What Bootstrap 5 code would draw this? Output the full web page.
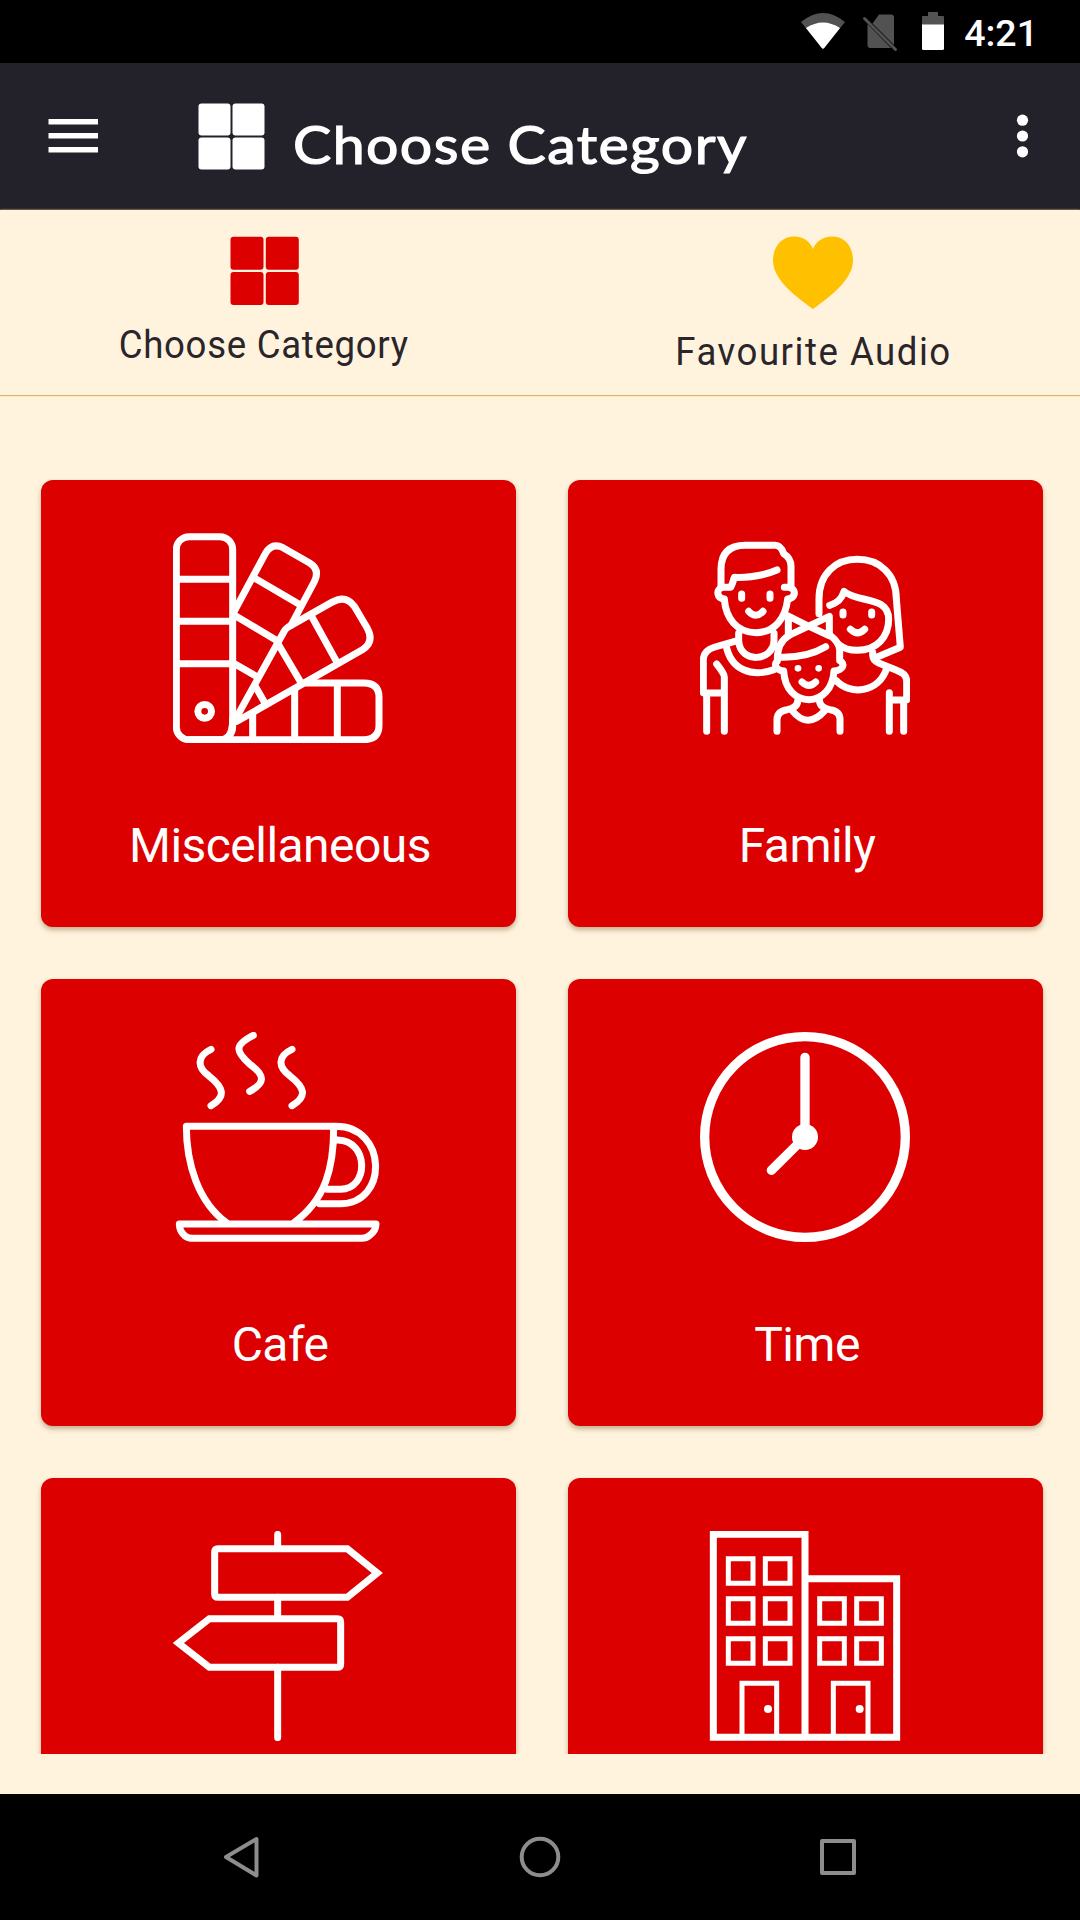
<!DOCTYPE html>
<html lang="en">
<head>
<meta charset="utf-8">
<meta name="viewport" content="width=device-width, initial-scale=1">
<title>Choose Category</title>
<link rel="stylesheet" href="https://cdn.jsdelivr.net/npm/bootstrap@5.3.0/dist/css/bootstrap.min.css">
<style>
  body { font-family: Roboto, "Liberation Sans", sans-serif; background: #fff3dd; width: 1080px; height: 1920px; overflow: hidden; }
  svg { display: block; flex: none; }
  .status-bar { height: 63px; padding-right: 42px; background: #000; }
  .clock { font-size: 37.5px; font-weight: 500; line-height: 44px; margin: 10.5px 0 0 19px; }
  .app-bar { height: 147px; background: #23212a; padding: 0 50px 1px 48px; }
  .app-title { font-family: Lato, sans-serif; font-weight: 400; font-size: 53px; line-height: 66px; letter-spacing: 1.3px; margin: 15px 0 0 28px; white-space: nowrap; -webkit-text-stroke: 1.2px #fff; transform: scaleX(1.08); transform-origin: left center; }
  .tab-strip { height: 186px; border-bottom: 1px solid #d9b466; box-shadow: 0 0 2px #f3d58b; color: #29252b; }
  .tab-item { padding-top: 26px; }
  .tab-category { padding-right: 12px; }
  .tab-favourite { padding-left: 6px; }
  .tab-label { font-size: 38.5px; line-height: 44px; white-space: nowrap; transform: scaleX(.95); }
  .tab-category .tab-label { letter-spacing: .75px; margin-top: 18px; }
  .tab-favourite .tab-label { letter-spacing: 1.6px; margin-top: 21px; }
  .tile-area { height: 1358px; padding: 84px 37px 0 41px; overflow: hidden; }
  .tile-grid { display: grid; grid-template-columns: 475px 475px; column-gap: 52px; row-gap: 52px; }
  .tile { height: 447px; background: #dc0000; border: 0; border-radius: 12px; padding-top: 53px; box-shadow: 0 3px 5px rgba(90,50,0,.35); color: #fff; }
  .tile-name { font-size: 48px; line-height: 56px; letter-spacing: -.55px; margin-top: 75px; margin-left: 3px; }
  .line-art { fill: none; stroke: #fff; stroke-width: 21; stroke-linejoin: round; stroke-linecap: round; margin-right: 1px; }
  .nav-strip { height: 126px; background: #000; margin-top: 40px; }
</style>
<script src="https://cdn.jsdelivr.net/npm/bootstrap@5.3.0/dist/js/bootstrap.bundle.min.js"></script>
</head>
<body class="d-flex flex-column">
<div class="status-bar d-flex align-items-start justify-content-end text-white">
  <svg width="146" height="63" viewBox="800 0 146 63">
    <path d="M802 22Q824 4 846 22L826 47Q824 50.500 822 47Z" fill="#525252"/>
    <path d="M807 28Q824 17 841 28L826 47Q824 50.500 822 47Z" fill="#fff"/>
    <path d="M880 14.500H892Q895 14.500 895 17.500V45L873.500 23.500ZM868.500 24L892 48H871.500Q868.500 48 868.500 45Z" fill="#525252"/>
    <path d="M865.500 18.500L896.500 49.500" stroke="#525252" stroke-width="3" stroke-linecap="round"/>
    <path d="M923 25V17Q923 16 924 16H929V12H939V16H944Q945 16 945 17V25Z" fill="#525252"/>
    <path d="M923 24.500H945V48.500Q945 50 943.500 50H924.500Q923 50 923 48.500Z" fill="#fff"/>
  </svg>
  <span class="clock">4:21</span>
</div>
<nav class="app-bar d-flex align-items-center text-white">
  <svg width="50" height="36" viewBox="0 0 50 36" fill="#fff"><path d="M.5 1H50V6.500H.5ZM.5 15H50V20.500H.5ZM.5 29H50V34.500H.5Z"/></svg>
  <svg style="margin-left:100px" width="67" height="67" viewBox="0 0 67 67" fill="#fff"><rect x=".5" y=".5" width="32" height="32" rx="3"/><rect x="34.500" y=".5" width="32" height="32" rx="3"/><rect x=".5" y="34.500" width="32" height="32" rx="3"/><rect x="34.500" y="34.500" width="32" height="32" rx="3"/></svg>
  <h1 class="app-title mb-0">Choose Category</h1>
  <svg class="ms-auto" width="15" height="44" viewBox="0 0 15 44" fill="#fff"><circle cx="7.500" cy="6.200" r="5.600"/><circle cx="7.500" cy="22" r="5.600"/><circle cx="7.500" cy="37.800" r="5.600"/></svg>
</nav>
<div class="tab-strip d-flex">
  <div class="tab-item tab-category w-50 d-flex flex-column align-items-center">
    <svg width="69" height="69" viewBox="0 0 69 69" fill="#dc0000"><rect x=".5" y=".8" width="33" height="33" rx="3"/><rect x="35.800" y=".8" width="33" height="33" rx="3"/><rect x=".5" y="36" width="33" height="33" rx="3"/><rect x="35.800" y="36" width="33" height="33" rx="3"/></svg>
    <span class="tab-label">Choose Category</span>
  </div>
  <div class="tab-item tab-favourite w-50 d-flex flex-column align-items-center">
    <svg width="80" height="73" viewBox="0 0 80 73"><path d="M40 73C19 58 0 42 0 24.500C0 10 9 .5 21.500 .5C30.500 .5 37 5.500 40 13C43 5.500 50 .5 59 .5C71.500 .5 80 10 80 24.500C80 42 61 58 40 73Z" fill="#ffc000"/></svg>
    <span class="tab-label">Favourite Audio</span>
  </div>
</div>
<main class="tile-area">
  <div class="tile-grid">
    <div class="tile card align-items-center">
      <svg class="line-art" width="210" height="210" viewBox="70 68 630 630">
        <rect x="80" y="79" width="169" height="609" rx="38"/>
        <path d="M80 207H249M80 333H249M80 460H249"/>
        <circle cx="165" cy="603" r="20.500"/>
        <path d="M250 310L347 130Q366 96 400 112L480 158Q512 178 494 214L424 345"/>
        <path d="M314 203L446 280M252 313L385 393M252 459L322 499"/>
        <path d="M250 640L404 362Q410 352 424 345L546 276Q588 252 614 288L653 354Q675 395 638 418L262 633"/>
        <path d="M487 320L562 456M385 400L456 520M318 530L347 580"/>
        <path d="M470 518H642Q688 518 688 560V645Q688 688 642 688H120M563 520V688M435 538V688M309 610V688M249 625Q250 668 230 686"/>
      </svg>
      <div class="tile-name">Miscellaneous</div>
    </div>
    <div class="tile card align-items-center">
      <svg class="line-art" width="210" height="210" viewBox="60 68 630 630">
        <path d="M313 231H333V168Q333 143 311 130Q303 105 285 105H196Q123 105 123 178V231H152Q157 222 163 201Q235 203 291 179"/>
        <path d="M123 233C109 238 109 264 133 266C137 323 170 367 228 367C285 367 317 322 323 266C346 264 349 240 333 233"/>
        <path d="M185 251V264M270 251V264M489 305V314M575 305V314"/>
        <path d="M206 303Q228 327 249 303M511 357Q533 378 554 357M366 515Q387 535 407 515"/>
        <path d="M176 369V392C181 460 278 455 282 392V369M172 391L105 410Q70 420 70 449V548H132M80 552V663M133 663V500Q133 490 110 461M138 403C151 481 218 501 282 478"/>
        <path d="M417 310V266C417 190 467 147 532 147C597 147 649 190 649 266L661 411L590 441"/>
        <path d="M449 285Q483 275 492 243C535 279 626 256 626 327C626 380 590 420 532 420C510 420 489 413 476 402"/>
        <path d="M578 426V435Q579 450 594 457L650 480Q680 490 680 512V569H636M628 547V663M671 573V663M620 474C596 549 508 555 469 511"/>
        <path d="M325 317V376L448 318V376Q386 349 325 317"/>
        <path d="M326 376Q292 396 292 446V453C282 458 284 478 311 482C314 537 347 568 387 568C426 568 459 535 462 482C492 479 496 459 479 451V420Q479 397 452 376M294 440Q378 444 437 409"/>
        <circle cx="354" cy="474" r="10" fill="#fff" stroke="none"/><circle cx="416" cy="474" r="10" fill="#fff" stroke="none"/>
        <path d="M291 663V627Q292 602 322 598Q354 593 354 567M480 663V627Q480 602 450 598Q418 593 418 567M336 600Q383 659 435 600"/>
      </svg>
      <div class="tile-name">Family</div>
    </div>
    <div class="tile card align-items-center">
      <svg class="line-art" width="210" height="210" viewBox="70 66 630 630">
        <path d="M184 118C140 139 143 172 177 197C222 233 231 259 184 287M311 76C250 106 260 126 301 163C350 198 344 221 300 244M427 118C382 139 386 172 420 197C466 233 474 259 427 287"/>
        <path d="M110 349H559C713 349 717 581 572 581H510M110 349C110 460 145 575 230 638M552 355C552 470 529 567 435 636M564 390C659 392 658 538 573 538H532"/>
        <path d="M89 642H679Q679 663 659 677Q650 685 637 685H130Q115 685 105 677Q89 663 89 642Z"/>
      </svg>
      <div class="tile-name">Cafe</div>
    </div>
    <div class="tile card align-items-center">
      <svg class="line-art" width="210" height="210" viewBox="60 66 630 630">
        <circle cx="375" cy="381" r="301" stroke-width="28"/>
        <path d="M375 381V142M375 381L274 481" stroke-width="28"/>
        <circle cx="375" cy="381" r="39" fill="#fff" stroke="none"/>
      </svg>
      <div class="tile-name">Time</div>
    </div>
    <div class="tile card align-items-center">
      <svg class="line-art" width="210" height="210" viewBox="70 63 630 630">
        <path d="M384 73V115M384 262V325M384 472V683"/>
        <path d="M205 116H593L683 189L593 262H205Q195 262 195 252V126Q195 116 205 116ZM563 326H179L86 399L179 472H563Q573 472 573 462V336Q573 326 563 326Z" stroke-linejoin="miter"/>
      </svg>
    </div>
    <div class="tile card align-items-center">
      <svg class="line-art" width="210" height="210" viewBox="60 63 630 630" style="stroke-linejoin:miter;stroke-linecap:butt">
        <path d="M100 73H375V682H100ZM375 206H650V682H375"/>
        <path stroke-width="15" d="M145 146H219V220H145ZM256 146H330V220H256ZM145 266H219V340H145ZM256 266H330V340H256ZM145 386H219V460H145ZM256 386H330V460H256ZM419 266H493V340H419ZM530 266H604V340H530ZM419 386H493V460H419ZM530 386H604V460H530ZM186 676V520H290V676M460 676V520H564V676"/>
        <circle cx="264" cy="597" r="12" fill="#fff" stroke="none"/><circle cx="539" cy="597" r="12" fill="#fff" stroke="none"/>
      </svg>
    </div>
  </div>
</main>
<footer class="nav-strip d-flex justify-content-center">
  <svg width="1080" height="126" viewBox="0 1794 1080 126" fill="none" stroke="#8d8d8d" stroke-width="4" stroke-linejoin="round"><path d="M226 1857L256.500 1839V1875.500Z"/><circle cx="540" cy="1857" r="18.300"/><rect x="822" y="1841" width="32" height="32"/></svg>
</footer>
</body>
</html>
